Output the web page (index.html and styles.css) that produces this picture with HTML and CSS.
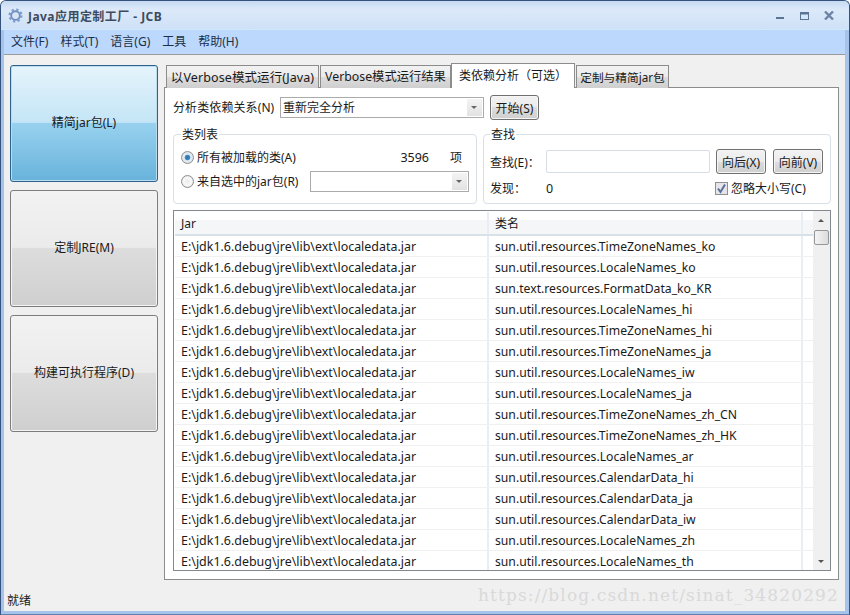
FILE: index.html
```html
<!DOCTYPE html>
<html lang="zh">
<head>
    <meta charset="UTF-8">
    <title>Java应用定制工厂 - JCB</title>
    <link rel="stylesheet" href="styles.css">
</head>
<body>
    <div class="window">
        <header class="titlebar">
            <svg class="app-icon" width="15" height="15" viewBox="0 0 16 16">
                <circle cx="8" cy="8" r="4.6" fill="none" stroke="#6f8fc0" stroke-width="2"/>
                <circle cx="8" cy="8" r="6.2" fill="none" stroke="#7f9dcb" stroke-width="2.6" stroke-dasharray="2.4 2.47"/>
                <circle cx="8" cy="8" r="2.4" fill="#d8e4f4"/>
            </svg>
            <span class="app-title">Java应用定制工厂 - JCB</span>
            <div class="win-controls">
                <svg class="win-min" width="8" height="10" viewBox="0 0 8 10"><rect x="0" y="7" width="8" height="2" fill="#5d7595"/></svg>
                <svg class="win-max" width="9" height="9" viewBox="0 0 9 9"><rect x="0.5" y="1.5" width="8" height="7" fill="none" stroke="#5d7595"/><rect x="0" y="1" width="9" height="2.5" fill="#5d7595"/></svg>
                <svg class="win-close" width="10" height="9" viewBox="0 0 10 9"><path d="M1 0.5L9 8.5M9 0.5L1 8.5" stroke="#6c83a3" stroke-width="2.4" fill="none"/></svg>
            </div>
        </header>
        <nav class="menubar">
            <span>文件(F)</span>
            <span>样式(T)</span>
            <span>语言(G)</span>
            <span>工具</span>
            <span>帮助(H)</span>
        </nav>
        <div class="client">
            <aside class="sidebar">
                <button class="side-btn active">精简jar包(L)</button>
                <button class="side-btn">定制JRE(M)</button>
                <button class="side-btn">构建可执行程序(D)</button>
            </aside>
            <main class="tabs">
                <div class="tab-strip">
                    <div class="tab tab-first">以Verbose模式运行(Java)</div>
                    <div class="tab tab-second">Verbose模式运行结果</div>
                    <div class="tab tab-current">类依赖分析（可选）</div>
                    <div class="tab tab-last">定制与精简jar包</div>
                </div>
                <section class="tab-panel">
                    <div class="analysis-row">
                        <label class="analysis-label">分析类依赖关系(N)</label>
                        <div class="combo combo-mode">
                            <span>重新完全分析</span>
                            <i class="combo-arrow"></i>
                        </div>
                        <button class="btn btn-start">开始(S)</button>
                    </div>
                    <div class="groups">
                        <fieldset class="group group-classes">
                            <legend>类列表</legend>
                            <div class="class-row">
                                <i class="radio checked"></i>
                                <span class="radio-label">所有被加载的类(A)</span>
                                <span class="class-count">3596</span>
                                <span class="class-unit">项</span>
                            </div>
                            <div class="class-row">
                                <i class="radio"></i>
                                <span class="radio-label">来自选中的jar包(R)</span>
                                <div class="combo combo-jar"><i class="combo-arrow"></i></div>
                            </div>
                        </fieldset>
                        <fieldset class="group group-find">
                            <legend>查找</legend>
                            <div class="find-row">
                                <span class="find-label">查找(E)：</span>
                                <div class="find-input"></div>
                                <button class="btn btn-find">向后(X)</button>
                                <button class="btn btn-find">向前(V)</button>
                            </div>
                            <div class="found-row">
                                <span class="find-label">发现：</span>
                                <span class="found-count">0</span>
                                <i class="checkbox"><svg width="11" height="11" viewBox="0 0 11 11"><path d="M2 5.5L4.5 9L9 1.5" fill="none" stroke="#5b6f9c" stroke-width="2"/></svg></i>
                                <span>忽略大小写(C)</span>
                            </div>
                        </fieldset>
                    </div>
                    <div class="list">
                        <div class="list-body">
                            <div class="list-head">
                                <div class="cell cell-jar">Jar</div>
                                <div class="cell cell-name">类名</div>
                                <div class="cell cell-rest"></div>
                            </div>
                            <div class="list-row"><div class="cell cell-jar">E:\jdk1.6.debug\jre\lib\ext\localedata.jar</div><div class="cell cell-name">sun.util.resources.TimeZoneNames_ko</div><div class="cell cell-rest"></div></div>
                            <div class="list-row"><div class="cell cell-jar">E:\jdk1.6.debug\jre\lib\ext\localedata.jar</div><div class="cell cell-name">sun.util.resources.LocaleNames_ko</div><div class="cell cell-rest"></div></div>
                            <div class="list-row"><div class="cell cell-jar">E:\jdk1.6.debug\jre\lib\ext\localedata.jar</div><div class="cell cell-name">sun.text.resources.FormatData_ko_KR</div><div class="cell cell-rest"></div></div>
                            <div class="list-row"><div class="cell cell-jar">E:\jdk1.6.debug\jre\lib\ext\localedata.jar</div><div class="cell cell-name">sun.util.resources.LocaleNames_hi</div><div class="cell cell-rest"></div></div>
                            <div class="list-row"><div class="cell cell-jar">E:\jdk1.6.debug\jre\lib\ext\localedata.jar</div><div class="cell cell-name">sun.util.resources.TimeZoneNames_hi</div><div class="cell cell-rest"></div></div>
                            <div class="list-row"><div class="cell cell-jar">E:\jdk1.6.debug\jre\lib\ext\localedata.jar</div><div class="cell cell-name">sun.util.resources.TimeZoneNames_ja</div><div class="cell cell-rest"></div></div>
                            <div class="list-row"><div class="cell cell-jar">E:\jdk1.6.debug\jre\lib\ext\localedata.jar</div><div class="cell cell-name">sun.util.resources.LocaleNames_iw</div><div class="cell cell-rest"></div></div>
                            <div class="list-row"><div class="cell cell-jar">E:\jdk1.6.debug\jre\lib\ext\localedata.jar</div><div class="cell cell-name">sun.util.resources.LocaleNames_ja</div><div class="cell cell-rest"></div></div>
                            <div class="list-row"><div class="cell cell-jar">E:\jdk1.6.debug\jre\lib\ext\localedata.jar</div><div class="cell cell-name">sun.util.resources.TimeZoneNames_zh_CN</div><div class="cell cell-rest"></div></div>
                            <div class="list-row"><div class="cell cell-jar">E:\jdk1.6.debug\jre\lib\ext\localedata.jar</div><div class="cell cell-name">sun.util.resources.TimeZoneNames_zh_HK</div><div class="cell cell-rest"></div></div>
                            <div class="list-row"><div class="cell cell-jar">E:\jdk1.6.debug\jre\lib\ext\localedata.jar</div><div class="cell cell-name">sun.util.resources.LocaleNames_ar</div><div class="cell cell-rest"></div></div>
                            <div class="list-row"><div class="cell cell-jar">E:\jdk1.6.debug\jre\lib\ext\localedata.jar</div><div class="cell cell-name">sun.util.resources.CalendarData_hi</div><div class="cell cell-rest"></div></div>
                            <div class="list-row"><div class="cell cell-jar">E:\jdk1.6.debug\jre\lib\ext\localedata.jar</div><div class="cell cell-name">sun.util.resources.CalendarData_ja</div><div class="cell cell-rest"></div></div>
                            <div class="list-row"><div class="cell cell-jar">E:\jdk1.6.debug\jre\lib\ext\localedata.jar</div><div class="cell cell-name">sun.util.resources.CalendarData_iw</div><div class="cell cell-rest"></div></div>
                            <div class="list-row"><div class="cell cell-jar">E:\jdk1.6.debug\jre\lib\ext\localedata.jar</div><div class="cell cell-name">sun.util.resources.LocaleNames_zh</div><div class="cell cell-rest"></div></div>
                            <div class="list-row"><div class="cell cell-jar">E:\jdk1.6.debug\jre\lib\ext\localedata.jar</div><div class="cell cell-name">sun.util.resources.LocaleNames_th</div><div class="cell cell-rest"></div></div>
                        </div>
                        <div class="scrollbar">
                            <i class="scroll-up"></i>
                            <div class="scroll-thumb"></div>
                            <div class="scroll-track"></div>
                            <i class="scroll-down"></i>
                        </div>
                    </div>
                </section>
            </main>
        </div>
        <footer class="statusbar">就绪</footer>
        <div class="watermark">https://blog.csdn.net/sinat_34820292</div>
    </div>
</body>
</html>
```

FILE: styles.css
```css
/* Umum */
html, body {
    margin: 0;
    height: 100%;
    overflow: hidden;
    background: #fff;
}

body {
    font-family: "Noto Sans", "Noto Sans CJK SC", sans-serif;
    font-size: 12px;
    color: #1a1a1a;
}

* {
    box-sizing: border-box;
}

button {
    font: inherit;
    color: inherit;
}

i {
    display: block;
}

.window {
    position: relative;
    width: 850px;
    height: 615px;
    display: flex;
    flex-direction: column;
    padding: 0 4px 3px 3px;
    border: 1px solid #34527c;
    border-bottom-color: #5c82b4;
    border-radius: 6px 6px 0 0;
    background: #a6c4ea;
}

/* Title bar */
.titlebar {
    height: 29px;
    flex: none;
    display: flex;
    align-items: center;
    margin: 0 -4px 0 -3px;
    padding: 0 15px 0 7px;
    background: linear-gradient(#c6daf3, #dce9f9 30%, #cfe1f7);
    border-bottom: 1px solid #d2e6fd;
    border-radius: 5px 5px 0 0;
}

.app-icon {
    flex: none;
}

.app-title {
    margin: 2px 0 0 5px;
    font-size: 12px;
    font-weight: 700;
    color: #3d4b5e;
    letter-spacing: 0.45px;
}

.win-controls {
    margin-left: auto;
    display: flex;
    align-items: center;
    gap: 15px;
}

.win-min {
    margin-right: 1px;
}

/* Menu */
.menubar {
    height: 25px;
    flex: none;
    display: flex;
    align-items: center;
    gap: 12px;
    padding: 0 0 2px 7px;
    background: #bcd9fd;
    border-bottom: 1px solid #9a9a9a;
    color: #1c2f48;
}

.client {
    flex: 1;
    min-height: 0;
    display: flex;
    background: #f0f0f0;
    padding: 8px 6px 0 6px;
    gap: 6px;
}

/* Sidebar */
.sidebar {
    width: 148px;
    flex: none;
    display: flex;
    flex-direction: column;
    gap: 8px;
    margin-top: 2px;
}

.side-btn {
    height: 117px;
    padding: 0 0 3px;
    border: 1px solid #7c7c7c;
    border-radius: 3px;
    background: linear-gradient(#f2f2f2, #ebebeb 49%, #dddddd 50%, #cfcfcf);
    box-shadow: inset 0 0 0 1px #f4f4f4;
}

.side-btn.active {
    border-color: #2c628b;
    background: linear-gradient(#e5f4fc, #c4e5f6 49%, #98d1ef 50%, #68b3db);
    box-shadow: inset 0 0 0 1px #bcdcee;
}

/* Tabs */
.tabs {
    flex: 1;
    min-width: 0;
    display: flex;
    flex-direction: column;
}

.tab-strip {
    height: 24px;
    flex: none;
    display: flex;
    align-items: flex-start;
    padding-left: 2px;
    gap: 1px;
    position: relative;
    z-index: 1;
}

.tab {
    height: 23px;
    margin-top: 2px;
    display: flex;
    align-items: center;
    justify-content: center;
    border: 1px solid #8c8c8c;
    border-bottom: none;
    padding-bottom: 2px;
    background: linear-gradient(#f2f2f2, #ebebeb 50%, #dddddd 50%, #cfcfcf);
    white-space: nowrap;
}

.tab-first {
    width: 153px;
    font-size: 12.5px;
    letter-spacing: 0.1px;
}

.tab-second {
    width: 131px;
    font-size: 12.3px;
}

.tab-current {
    width: 124px;
    height: 25px;
    margin: 0 0 0 -1px;
    background: #fff;
    padding-bottom: 3px;
}

.tab-last {
    width: 93px;
    font-size: 11.7px;
}

.tab-panel {
    flex: 1;
    min-height: 0;
    display: flex;
    flex-direction: column;
    background: #fff;
    border: 1px solid #8c8c8c;
    margin-bottom: 31px;
    padding: 7px 7px 8px 8px;
}

.analysis-row {
    height: 25px;
    flex: none;
    display: flex;
    align-items: center;
}

.analysis-label {
    width: 107px;
    flex: none;
    padding-bottom: 1px;
    letter-spacing: 0.1px;
}

.combo {
    display: flex;
    align-items: center;
    height: 21px;
    padding: 1px 1px 1px 2px;
    border: 1px solid #ababab;
    background: #fff;
}

.combo-mode {
    width: 204px;
}

.combo-mode span {
    padding-bottom: 2px;
}

.combo-arrow {
    margin-left: auto;
    width: 15px;
    height: 100%;
    flex: none;
    background: linear-gradient(#f4f4f4, #e2e2e2);
    position: relative;
}

.combo-arrow::after {
    content: "";
    position: absolute;
    left: 4px;
    top: 7px;
    border: 3.5px solid transparent;
    border-top: 3.5px solid #666;
    border-bottom: none;
}

.btn {
    height: 25px;
    padding: 0;
    border: 1px solid #707070;
    border-radius: 3px;
    background: linear-gradient(#f2f2f2, #ebebeb 50%, #dddddd 50%, #cfcfcf);
    box-shadow: inset 0 0 0 1px #f6f6f6;
}

.btn-start {
    width: 49px;
    margin-left: 6px;
}

/* Group boxes */
.groups {
    height: 78px;
    flex: none;
    display: flex;
    gap: 6px;
    margin-top: 6px;
}

.group {
    min-width: 0;
    margin: 0;
    border: 1px solid #d9dfe6;
    border-radius: 4px;
}

.group legend {
    padding: 2px 1px 0;
    line-height: 14px;
}

.group-classes {
    width: 304px;
    padding: 3px 7px 0;
}

.group-find {
    flex: 1;
    padding: 7px 6px 0;
}

.class-row {
    display: flex;
    align-items: center;
    height: 24px;
}

.radio {
    width: 13px;
    height: 13px;
    flex: none;
    border: 1px solid #8e8f8f;
    border-radius: 50%;
    background: radial-gradient(circle, #ececec, #f8f8f8 50%, #cfcfcf);
}

.radio.checked {
    background: radial-gradient(circle, #2a6ca8 0, #3f8cc4 30%, #e6eef4 42%, #cfd6dc 100%);
}

.radio-label {
    margin-left: 3px;
}

.class-count {
    margin-left: auto;
    font-size: 12.5px;
}

.class-unit {
    margin: 0 7px 0 21px;
}

.combo-jar {
    width: 159px;
    margin-left: auto;
}

.find-row {
    display: flex;
    align-items: center;
    height: 25px;
}

.find-label {
    width: 56px;
    flex: none;
}

.find-input {
    width: 164px;
    height: 23px;
    border: 1px solid #d6dde6;
    border-radius: 2px;
    background: #fff;
}

.btn-find {
    width: 50px;
    margin-left: 6px;
}

.btn-find + .btn-find {
    margin-left: 7px;
}

.found-row {
    display: flex;
    align-items: center;
    height: 28px;
}

.found-count {
    width: 169px;
    font-size: 12.5px;
}

.checkbox {
    width: 13px;
    height: 13px;
    border: 1px solid #8e8f8f;
    background: #e6e6ea;
    margin-right: 3px;
    display: flex;
}

/* List */
.list {
    flex: 1;
    min-height: 0;
    display: flex;
    margin-top: 6px;
    border: 1px solid #828790;
    padding: 0 0 0 1px;
    overflow: hidden;
}

.list-body {
    flex: 1;
    min-width: 0;
    padding-top: 1px;
}

.list-head {
    display: flex;
    height: 24px;
    background: linear-gradient(#fff, #fff 37%, #f4f6f8 38%, #f4f6f8);
    border-bottom: 2px solid #d8e0e8;
}

.list-row {
    display: flex;
    height: 21px;
    border-bottom: 1px solid #f0f0f0;
    font-size: 12.45px;
}

.cell {
    display: flex;
    align-items: center;
    padding-left: 6px;
    white-space: nowrap;
    border-right: 2px solid #e9eef6;
}

.cell-jar {
    width: 314px;
}

.cell-name {
    width: 314px;
}

.list-row .cell-name {
    font-size: 12.2px;
}

.cell-rest {
    flex: 1;
    border-right: none;
}

.scrollbar {
    width: 17px;
    flex: none;
    display: flex;
    flex-direction: column;
    background: #f0f0f0;
}

.scroll-up,
.scroll-down {
    flex: none;
    position: relative;
}

.scroll-up {
    height: 19px;
}

.scroll-down {
    height: 18px;
}

.scroll-up::after,
.scroll-down::after {
    content: "";
    position: absolute;
    left: 5px;
    top: 8px;
    border: 3.5px solid transparent;
}

.scroll-up::after {
    border-bottom-color: #555;
    border-top: none;
}

.scroll-down::after {
    border-top-color: #555;
    border-bottom: none;
}

.scroll-thumb {
    height: 15px;
    flex: none;
    margin: 0 1px;
    border: 1px solid #979797;
    border-radius: 2px;
    background: linear-gradient(90deg, #f4f4f4, #dcdcdc);
}

.scroll-track {
    flex: 1;
}

/* Status */
.statusbar {
    position: absolute;
    left: 6px;
    bottom: 4px;
    line-height: 18px;
}

.watermark {
    position: absolute;
    right: 10px;
    bottom: 9px;
    font-family: "DejaVu Serif", serif;
    font-size: 17px;
    color: #d9d9d9;
    letter-spacing: 1.13px;
}
```
